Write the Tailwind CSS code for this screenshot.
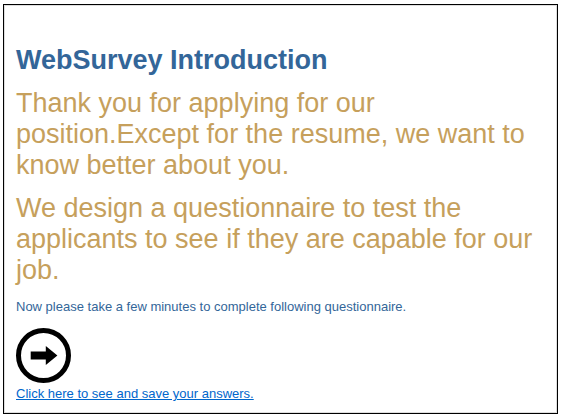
<!DOCTYPE html>
<html lang="en">
<head>
<meta charset="utf-8">
<title>WebSurvey Introduction</title>
<script src="https://cdn.jsdelivr.net/npm/@tailwindcss/browser@4"></script>
</head>
<body class="bg-white font-['Liberation_Sans',Arial,sans-serif]">
<main class="mt-1 mr-[5px] ml-[3px] border border-black px-3 pt-10 pb-2.5 text-[#336699] inset-shadow-[0_0_0_1px_#dedede]">
<h1 class="text-[27px] leading-[31px] font-bold">WebSurvey Introduction</h1>
<p class="mt-3 text-[27px] leading-[31px] text-[#c6a05c]">Thank you for applying for our position.Except for the resume, we want to know better about you.</p>
<p class="mt-3 text-[27px] leading-[31px] text-[#c6a05c]">We design a questionnaire to test the applicants to see if they are capable for our job.</p>
<p class="mt-3 text-[13px] leading-[18px]">Now please take a few minutes to complete following questionnaire.</p>
<button type="button" aria-label="Start questionnaire" class="mt-3 block size-[55px]">
<svg viewBox="0 0 55 55" class="size-full"><circle cx="27.5" cy="27.5" r="25" fill="none" stroke="#000" stroke-width="5"/><path d="M14.7 23.4H29.8V18L41.4 27.5 29.8 37V31.6H14.7z"/></svg>
</button>
<a href="#" class="mt-0.5 block text-[13px] leading-[18px] text-[#0066cc] underline">Click here to see and save your answers.</a>
</main>
</body>
</html>
